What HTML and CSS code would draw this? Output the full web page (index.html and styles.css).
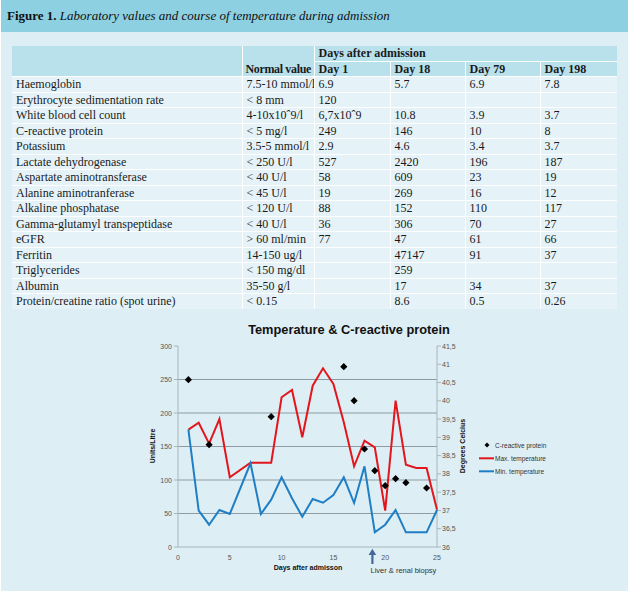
FILE: index.html
```html
<!DOCTYPE html>
<html lang="en">
<head>
<meta charset="utf-8">
<title>Figure 1</title>
<link rel="stylesheet" href="styles.css">
</head>
<body>
<figure class="panel">
  <div class="caption"><b>Figure 1.</b>&nbsp;<i>Laboratory values and course of temperature during admission</i></div>
  <div class="content">
    <table class="labs">
      <colgroup>
        <col class="c-name"><col class="c-norm"><col class="c-d1"><col class="c-d18"><col class="c-d79"><col class="c-d198">
      </colgroup>
      <thead>
        <tr><th rowspan="2"></th><th rowspan="2" class="bottom">Normal value</th><th colspan="4">Days after admission</th></tr>
        <tr><th>Day 1</th><th>Day 18</th><th>Day 79</th><th>Day 198</th></tr>
      </thead>
      <tbody>
        <tr><td>Haemoglobin</td><td>7.5-10 mmol/l</td><td>6.9</td><td>5.7</td><td>6.9</td><td>7.8</td></tr>
        <tr><td>Erythrocyte sedimentation rate</td><td>&lt; 8 mm</td><td>120</td><td></td><td></td><td></td></tr>
        <tr><td>White blood cell count</td><td>4-10x10ˆ9/l</td><td>6,7x10ˆ9</td><td>10.8</td><td>3.9</td><td>3.7</td></tr>
        <tr><td>C-reactive protein</td><td>&lt; 5 mg/l</td><td>249</td><td>146</td><td>10</td><td>8</td></tr>
        <tr><td>Potassium</td><td>3.5-5 mmol/l</td><td>2.9</td><td>4.6</td><td>3.4</td><td>3.7</td></tr>
        <tr><td>Lactate dehydrogenase</td><td>&lt; 250 U/l</td><td>527</td><td>2420</td><td>196</td><td>187</td></tr>
        <tr><td>Aspartate aminotransferase</td><td>&lt; 40 U/l</td><td>58</td><td>609</td><td>23</td><td>19</td></tr>
        <tr><td>Alanine aminotranferase</td><td>&lt; 45 U/l</td><td>19</td><td>269</td><td>16</td><td>12</td></tr>
        <tr><td>Alkaline phosphatase</td><td>&lt; 120 U/l</td><td>88</td><td>152</td><td>110</td><td>117</td></tr>
        <tr><td>Gamma-glutamyl transpeptidase</td><td>&lt; 40 U/l</td><td>36</td><td>306</td><td>70</td><td>27</td></tr>
        <tr><td>eGFR</td><td>&gt; 60 ml/min</td><td>77</td><td>47</td><td>61</td><td>66</td></tr>
        <tr><td>Ferritin</td><td>14-150 ug/l</td><td></td><td>47147</td><td>91</td><td>37</td></tr>
        <tr><td>Triglycerides</td><td>&lt; 150 mg/dl</td><td></td><td>259</td><td></td><td></td></tr>
        <tr><td>Albumin</td><td>35-50 g/l</td><td></td><td>17</td><td>34</td><td>37</td></tr>
        <tr><td>Protein/creatine ratio (spot urine)</td><td>&lt; 0.15</td><td></td><td>8.6</td><td>0.5</td><td>0.26</td></tr>
      </tbody>
    </table>

    <svg class="chart" viewBox="1 310 627 281" width="627" height="281" xmlns="http://www.w3.org/2000/svg">
      <defs>
        <path id="dia" d="M0,-3.6 L3.6,0 L0,3.6 L-3.6,0 Z"/>
        <path id="dia-s" d="M0,-2.5 L2.5,0 L0,2.5 L-2.5,0 Z"/>
      </defs>
      <text class="title" x="349" y="335" text-anchor="middle">Temperature &amp; C-reactive protein</text>

      <g class="grid">
        <line x1="178" y1="380.5" x2="437" y2="380.5"/>
        <line x1="178" y1="414" x2="437" y2="414"/>
        <line x1="178" y1="447.5" x2="437" y2="447.5"/>
        <line x1="178" y1="481" x2="437" y2="481"/>
        <line x1="178" y1="514.5" x2="437" y2="514.5"/>
      </g>
      <g class="axis">
        <line x1="178" y1="347" x2="178" y2="548"/>
        <line x1="437" y1="347" x2="437" y2="548"/>
        <line x1="178" y1="548" x2="437" y2="548"/>
        <line x1="174" y1="347" x2="178" y2="347"/>
        <line x1="174" y1="380.5" x2="178" y2="380.5"/>
        <line x1="174" y1="414" x2="178" y2="414"/>
        <line x1="174" y1="447.5" x2="178" y2="447.5"/>
        <line x1="174" y1="481" x2="178" y2="481"/>
        <line x1="174" y1="514.5" x2="178" y2="514.5"/>
        <line x1="174" y1="548" x2="178" y2="548"/>
        <line x1="437" y1="347" x2="441" y2="347"/>
        <line x1="437" y1="365.3" x2="441" y2="365.3"/>
        <line x1="437" y1="383.5" x2="441" y2="383.5"/>
        <line x1="437" y1="401.8" x2="441" y2="401.8"/>
        <line x1="437" y1="420.1" x2="441" y2="420.1"/>
        <line x1="437" y1="438.4" x2="441" y2="438.4"/>
        <line x1="437" y1="456.6" x2="441" y2="456.6"/>
        <line x1="437" y1="474.9" x2="441" y2="474.9"/>
        <line x1="437" y1="493.2" x2="441" y2="493.2"/>
        <line x1="437" y1="511.5" x2="441" y2="511.5"/>
        <line x1="437" y1="529.7" x2="441" y2="529.7"/>
        <line x1="437" y1="548" x2="441" y2="548"/>
      </g>

      <g class="tick left">
        <text x="172" y="349.5">300</text>
        <text x="172" y="383">250</text>
        <text x="172" y="416.5">200</text>
        <text x="172" y="450">150</text>
        <text x="172" y="483.5">100</text>
        <text x="172" y="517">50</text>
        <text x="172" y="550.5">0</text>
      </g>
      <g class="tick right">
        <text x="442" y="349.5">41,5</text>
        <text x="442" y="367.8">41</text>
        <text x="442" y="386">40,5</text>
        <text x="442" y="404.3">40</text>
        <text x="442" y="422.6">39,5</text>
        <text x="442" y="440.9">39</text>
        <text x="442" y="459.1">38,5</text>
        <text x="442" y="477.4">38</text>
        <text x="442" y="495.7">37,5</text>
        <text x="442" y="514">37</text>
        <text x="442" y="532.2">36,5</text>
        <text x="442" y="550.5">36</text>
      </g>
      <g class="tick bottom">
        <text x="178" y="561">0</text>
        <text x="229.8" y="561">5</text>
        <text x="281.6" y="561">10</text>
        <text x="333.4" y="561">15</text>
        <text x="385.2" y="561">20</text>
        <text x="437" y="561">25</text>
      </g>

      <text class="axis-title" transform="translate(155 447) rotate(-90)" text-anchor="middle">Units/Litre</text>
      <text class="axis-title" transform="translate(465 447) rotate(-90)" text-anchor="middle">Degrees Celcius</text>
      <text class="axis-title" x="308" y="571" text-anchor="middle">Days after admisson</text>

      <polyline class="max" points="188.4,430.7 198.7,423.7 209.1,444.7 219.4,420 229.8,478.3 250.5,463.7 260.9,463.7 271.2,463.7 281.6,398.3 292,391 302.3,438.3 312.7,386.7 323,369.3 333.4,385 343.8,423.3 354.1,467.3 364.5,441.7 374.8,448.3 385.2,511.7 395.6,401.7 405.9,465.7 416.3,469 426.6,469 437,510.7"/>
      <polyline class="min" points="188.4,430.7 198.7,511.7 209.1,525.7 219.4,511 229.8,515 250.5,464.3 260.9,515 271.2,500.7 281.6,478.3 292,499.3 302.3,517.7 312.7,500 323,503.7 333.4,496 343.8,478.3 354.1,504 364.5,467.3 374.8,533.3 385.2,525.7 395.6,511 405.9,533.3 416.3,533.3 426.6,533.3 437,511"/>

      <g class="crp">
        <use href="#dia" x="188.4" y="380.7"/>
        <use href="#dia" x="209.1" y="445.7"/>
        <use href="#dia" x="271.2" y="417.7"/>
        <use href="#dia" x="343.8" y="367.7"/>
        <use href="#dia" x="354.1" y="401.7"/>
        <use href="#dia" x="364.5" y="450"/>
        <use href="#dia" x="374.8" y="471.7"/>
        <use href="#dia" x="385.2" y="486.7"/>
        <use href="#dia" x="395.6" y="479.7"/>
        <use href="#dia" x="405.9" y="483.7"/>
        <use href="#dia" x="426.6" y="489"/>
      </g>

      <g class="legend">
        <use href="#dia-s" x="487" y="446"/>
        <text x="495" y="448.5">C-reactive protein</text>
        <line class="max" x1="479" y1="459.3" x2="494" y2="459.3"/>
        <text x="495" y="461.8">Max. temperature</text>
        <line class="min" x1="479" y1="472.3" x2="494" y2="472.3"/>
        <text x="495" y="474.8">Min. temperature</text>
      </g>

      <g class="arrow">
        <rect x="371.3" y="555" width="2.2" height="10"/>
        <path d="M368.6,556 L372.4,549.8 L376.2,556 Z"/>
      </g>
      <text class="note" x="370.5" y="574">Liver &amp; renal biopsy</text>
    </svg>
  </div>
</figure>
</body>
</html>
```
FILE: styles.css
```css
html, body {
  margin: 0;
  padding: 0;
  background: #ffffff;
}

.panel {
  margin: 0 0 0 1px;
  width: 627px;
  height: 591px;
  background: #ddeef5;
  overflow: hidden;
}

.caption {
  height: 32px;
  display: flex;
  align-items: center;
  padding-left: 6px;
  background: #8dd0e1;
  font-family: "Liberation Serif", "DejaVu Serif", serif;
  font-size: 13px;
  color: #111;
  white-space: nowrap;
}

.caption b {
  font-weight: bold;
}

.content {
  padding: 14px 0 0 11px;
}

.labs {
  width: 605px;
  table-layout: fixed;
  border-collapse: collapse;
  border-style: hidden;
  font-family: "Liberation Serif", "DejaVu Serif", serif;
  font-size: 12px;
  color: #1a1a1a;
}

.c-name { width: 230px; }
.c-norm { width: 72px; }
.c-d1 { width: 76px; }
.c-d18 { width: 75px; }
.c-d79 { width: 75px; }
.c-d198 { width: 77px; }

.labs th,
.labs td {
  height: 14.5px;
  padding: 0 0 0 4px;
  border: 1px solid #ffffff;
  text-align: left;
  vertical-align: middle;
  line-height: 14px;
  white-space: nowrap;
  overflow: hidden;
}

.labs th {
  background: #b9e1ec;
  font-weight: bold;
}

.labs th.bottom {
  vertical-align: bottom;
  padding-left: 3px;
  letter-spacing: -0.35px;
}

.labs td {
  background: #e5f3f9;
}

.chart {
  display: block;
  margin-left: -11px;
}

.chart text {
  font-family: "Liberation Sans", Arial, sans-serif;
}

.chart .title {
  font-size: 12.8px;
  font-weight: bold;
  fill: #111;
}

.chart .grid line {
  stroke: #8e9ba4;
  stroke-width: 1;
}

.chart .axis line {
  stroke: #a9b6bd;
  stroke-width: 1;
}

.chart .tick text {
  font-size: 7px;
  fill: #555;
}

.chart .tick.left text {
  text-anchor: end;
}

.chart .tick.bottom text {
  text-anchor: middle;
}

.chart .axis-title {
  font-size: 7px;
  font-weight: bold;
  fill: #111;
}

.chart polyline,
.chart .legend line {
  fill: none;
  stroke-width: 2;
  stroke-linejoin: miter;
}

.chart .max {
  stroke: #e2161d;
}

.chart .min {
  stroke: #1f7ec4;
}

.chart .crp use,
.chart .legend use {
  fill: #000;
}

.chart .legend text {
  font-size: 6.5px;
  fill: #333;
}

.chart .arrow rect,
.chart .arrow path {
  fill: #46699a;
}

.chart .note {
  font-size: 7.5px;
  fill: #333;
}
```
